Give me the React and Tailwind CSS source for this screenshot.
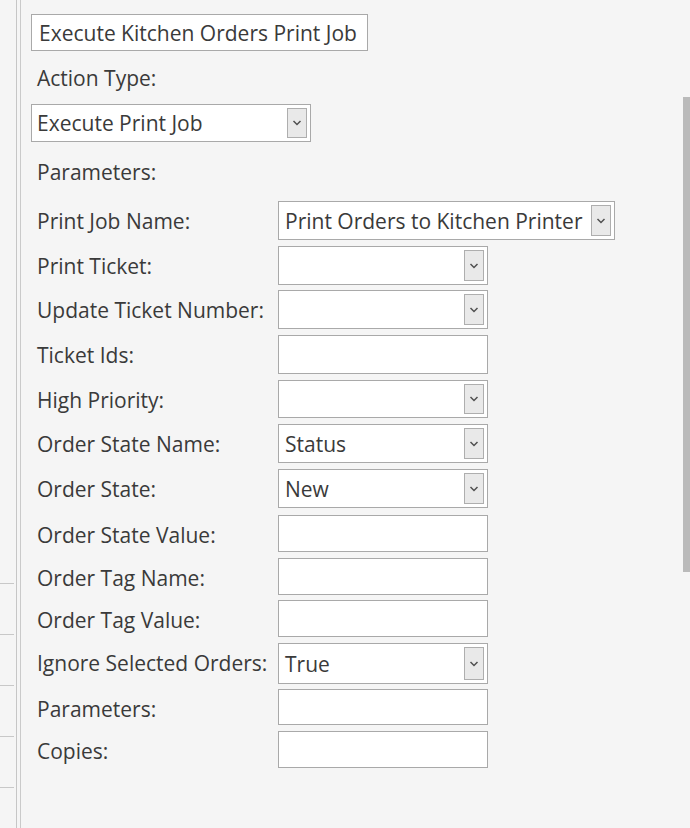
import React from 'react';

const rows = [
  { label: 'Print Job Name:', kind: 'select', value: 'Print Orders to Kitchen Printer', row: 'h-[45px]', box: 'h-[39px] w-[337px]' },
  { label: 'Print Ticket:', kind: 'select', value: '', row: 'h-[44px]', box: 'h-[39px] w-[210px]' },
  { label: 'Update Ticket Number:', kind: 'select', value: '', row: 'h-[45px]', box: 'h-[39px] w-[210px]' },
  { label: 'Ticket Ids:', kind: 'input', value: '', row: 'h-[45px]', box: 'h-[39px] w-[210px]' },
  { label: 'High Priority:', kind: 'select', value: '', row: 'h-[44px]', box: 'h-[38px] w-[210px]' },
  { label: 'Order State Name:', kind: 'select', value: 'Status', row: 'h-[45px]', box: 'h-[39px] w-[210px]' },
  { label: 'Order State:', kind: 'select', value: 'New', row: 'h-[46px]', box: 'h-[39px] w-[210px]' },
  { label: 'Order State Value:', kind: 'input', value: '', row: 'h-[43px]', box: 'h-[37px] w-[210px]' },
  { label: 'Order Tag Name:', kind: 'input', value: '', row: 'h-[42px]', box: 'h-[37px] w-[210px]' },
  { label: 'Order Tag Value:', kind: 'input', value: '', row: 'h-[43px]', box: 'h-[37px] w-[210px]' },
  { label: 'Ignore Selected Orders:', kind: 'select', value: 'True', row: 'h-[46px]', box: 'h-[41px] w-[210px]' },
  { label: 'Parameters:', kind: 'input', value: '', row: 'h-[42px]', box: 'h-[36px] w-[210px]' },
  { label: 'Copies:', kind: 'input', value: '', row: 'h-[42px]', box: 'h-[37px] w-[210px]' },
];

// small combo-box arrow button
const Chevron = () => (
  <div className="my-[3px] mr-[3px] w-[20px] shrink-0 self-stretch bg-[#e9e9e9] border border-[#aeaeae] flex items-center justify-center">
    <svg width="10" height="6" viewBox="0 0 10 6" fill="none">
      <path d="M1.5 1l3.5 3.5L8.5 1" stroke="#505050" strokeWidth="1.5" />
    </svg>
  </div>
);

const Field = ({ kind, value, box }) => (
  <div className={`${box} bg-white border border-[#a9a9a9] flex items-center`}>
    <span className="flex-1 pl-[6px] pt-[2px] whitespace-nowrap overflow-hidden">{value}</span>
    {kind === 'select' && <Chevron />}
  </div>
);

export default function App() {
  return (
    <div
      className="w-[690px] h-[828px] bg-[#f5f5f5] flex overflow-hidden text-[#3a3a3a] text-[21px]"
      style={{ fontFamily: '"Open Sans", "Noto Sans", sans-serif' }}
    >
      {/* Left list strip */}
      <div className="w-[17px] shrink-0 border-r border-[#c6c6c6] flex flex-col pt-[533px]">
        {[0, 1, 2, 3, 4].map((i) => (
          <div key={i} className="h-[51px] w-[14px] border-b border-[#c8c8c8]" />
        ))}
      </div>
      <div className="w-[4px] shrink-0 border-r border-[#cacaca]" />

      {/* Editor */}
      <div className="flex-1 pl-[10px] pt-[14px] flex flex-col">
        <div className="h-[37px] w-[337px] bg-white border border-[#a9a9a9] flex items-center pl-[7px] pt-[2px] whitespace-nowrap">
          Execute Kitchen Orders Print Job
        </div>
        <div className="h-[53px] flex items-center pl-[6px] pt-[2px]">Action Type:</div>
        <div className="h-[38px] w-[280px] bg-white border border-[#a9a9a9] flex items-center">
          <span className="flex-1 pl-[5px] pt-[2px]">Execute Print Job</span>
          <Chevron />
        </div>
        <div className="h-[59px] flex items-center pl-[6px] pt-[2px]">Parameters:</div>

        {rows.map((r) => (
          <div key={r.label} className={`${r.row} flex items-start`}>
            <div className="w-[247px] shrink-0 pl-[6px] whitespace-nowrap leading-[41px]">{r.label}</div>
            <Field kind={r.kind} value={r.value} box={r.box} />
          </div>
        ))}
      </div>

      {/* Scrollbar */}
      <div className="w-[7px] shrink-0 mt-[97px] h-[475px] bg-[#bababa]" />
    </div>
  );
}
